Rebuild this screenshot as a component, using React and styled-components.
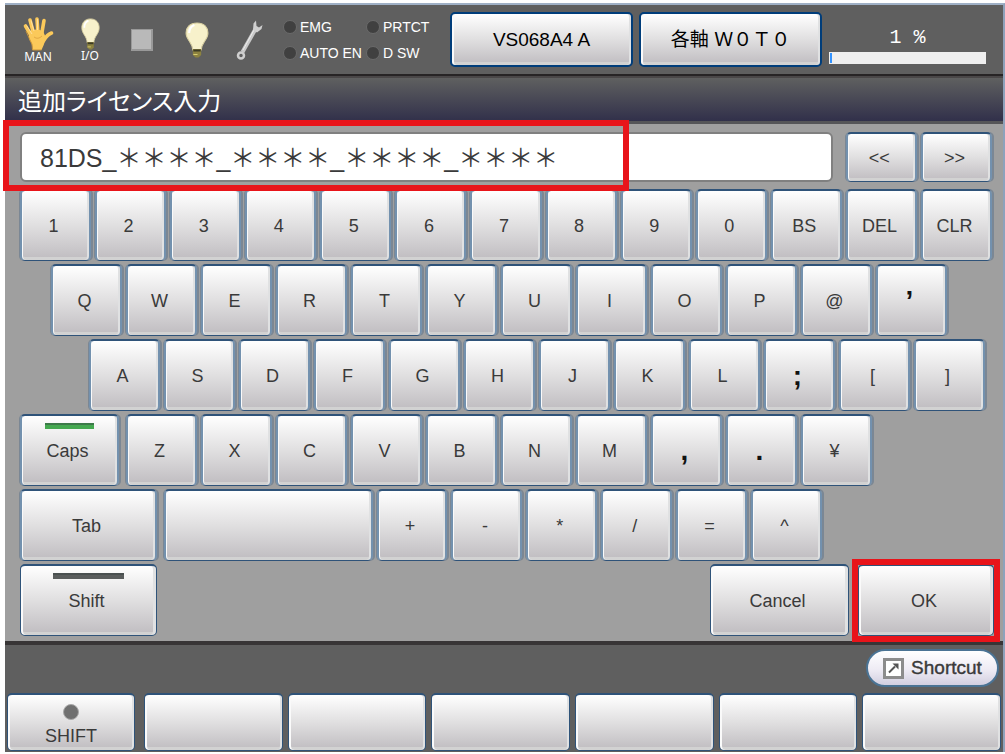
import React, { useState } from "react";
import styled, { createGlobalStyle, css } from "styled-components";

const GlobalStyle = createGlobalStyle`
  *, *::before, *::after { box-sizing: border-box; }
  body {
    margin: 0;
    background: #fff;
    color: #3a3a3a;
    font-family: "Liberation Sans", "Noto Sans CJK JP", sans-serif;
    font-size: 18px;
    line-height: 20px;
  }
  button, input { font: inherit; color: inherit; margin: 0; }
`;

const Pendant = styled.div`
  margin: 3px 0 3px 5px;
  border-top: 2px solid #9fb0c6;
  border-right: 2px solid #8ea2bb;
`;

const StatusBar = styled.header`
  display: flex;
  align-items: center;
  height: 71px;
  padding: 0 17px 0 16px;
  background: #5f5f5f;
  border-bottom: 2px solid #272425;
  color: #fff;
`;

const StatusIcon = styled.div`
  flex: none;
  display: flex;
  flex-direction: column;
  align-items: center;
  width: ${(p) => p.$width}px;
  font: 12px/12px "Noto Sans", "Liberation Sans", sans-serif;
  svg { display: block; }
`;

const LedGrid = styled.ul`
  flex: none;
  display: grid;
  grid-template-columns: 83px 84px;
  row-gap: 6px;
  margin: 0 0 0 18px;
  padding: 0;
  list-style: none;
  font-size: 14px;
`;

const LedItem = styled.li`
  display: flex;
  align-items: center;
  gap: 3px;
  white-space: nowrap;
  line-height: 20px;
`;

const Led = styled.span`
  width: 14px;
  height: 14px;
  border-radius: 50%;
  background: #404040;
  border: 1px solid #6a6a6a;
`;

const face = css`
  border: 1px solid #2f5379;
  border-top-width: 2px;
  border-radius: 5px;
  background: linear-gradient(#fff, #e0dfe0 50%, #bfbcc0);
  box-shadow: inset 2px 0 #fafafa, inset -2px 0 #e0e1e2, inset 0 -3px #d2d2d2;
  padding: 0;
  cursor: pointer;
`;

const HeaderButton = styled.button`
  ${face}
  flex: 1 1 0;
  height: 55px;
  margin-right: 6px;
  border-color: #003d7a;
  border-width: 2px;
  color: #000;
  font-size: 19px;
`;

const Speed = styled.div`
  flex: 0 0 157px;
  display: flex;
  flex-direction: column;
  align-items: center;
  gap: 3px;
  padding: 12px 0 0;
  margin-left: 1px;
  font: 20px/22px "Liberation Mono", monospace;
`;

const SpeedTrack = styled.div`
  width: 100%;
  height: 12px;
  padding: 1px;
  background: #efefef;
`;

const SpeedFill = styled.div`
  height: 10px;
  background: #3393ff;
`;

const Title = styled.h1`
  margin: 0;
  height: 48px;
  padding-left: 13px;
  background: linear-gradient(#5f6060, #31304a);
  border-top: 2px solid #4a4748;
  border-bottom: 3px solid #555558;
  color: #fff;
  font: 400 24px/43px "Noto Sans CJK JP", sans-serif;
  font-feature-settings: "palt";
`;

const KeyArea = styled.main`
  padding: 8px 11px 5px 15px;
  background: #9f9f9f;
  border-bottom: 4px solid #383536;
`;

const EntryRow = styled.div`
  position: relative;
  display: flex;
  gap: 4px;
  margin-bottom: 7px;
`;

const Entry = styled.input`
  flex: 812 1 812px;
  min-width: 0;
  height: 50px;
  margin-right: 9px;
  padding: 0 0 2px 18px;
  border: 2px solid #808080;
  border-radius: 6px;
  background: #fff;
  font-size: 25px;
  outline: none;
`;

const Callout = styled.span`
  position: absolute;
  z-index: 1;
  border: 6px solid #e8141a;
  pointer-events: none;
`;

const EntryCallout = styled(Callout)`
  left: -17px;
  right: 363px;
  top: -12px;
  bottom: -9px;
`;

const OkCallout = styled(Callout)`
  inset: -7px;
`;

const KeyRow = styled.div`
  display: flex;
  gap: 4px;
  padding: 0 ${(p) => p.$right || 0}px 0 ${(p) => p.$left || 0}px;
  margin-bottom: 3px;
`;

const KeyButton = styled.button`
  ${face}
  position: relative;
  flex: ${(p) => p.$span || 71} 1 ${(p) => p.$span || 71}px;
  min-width: 0;
  height: ${(p) => p.$height || 72}px;
  margin-right: ${(p) => p.$after || 0}px;
  padding-right: 4px;
  border-width: 2px 2px 1px;
  border-color: #2f5379 #7391ae;
  box-shadow: inset 1px 0 #fafafa, inset -2px 0 #e0e1e2, inset 0 -3px #d2d2d2,
    -1px 0 #7b8794, 2px 0 #7b8794;
  ${(p) => p.$mark && "font-size: 28px; font-weight: 700; color: #111;"}
`;

const Lamp = styled.span`
  position: absolute;
  top: 7px;
  left: 24%;
  right: 24%;
  height: 6px;
  background: ${(p) => (p.$on ? "#45a850" : "#5a5d5d")};
  border-top: 2px solid ${(p) => (p.$on ? "#3c7a48" : "#4a5050")};
`;

const Actions = styled.div`
  display: flex;
  justify-content: space-between;
  margin-right: -2px;
`;

const ActionButton = styled(KeyButton)`
  flex: none;
  width: ${(p) => p.$width}px;
  border-width: 2px 1px 1px;
  border-color: #2f5379;
  box-shadow: inset 2px 0 #fafafa, inset -3px 0 #e0e1e2, inset 0 -3px #d2d2d2;
`;

const ActionGroup = styled.div`
  display: flex;
  gap: 9px;
`;

const Footer = styled.footer`
  background: #5f5f5f;
  padding: 4px 2px 1px 2px;
`;

const ShortcutBar = styled.div`
  display: flex;
  justify-content: flex-end;
  padding-right: 2px;
  margin-bottom: 6px;
`;

const ShortcutButton = styled.button`
  display: flex;
  align-items: center;
  justify-content: center;
  gap: 7px;
  width: 133px;
  height: 38px;
  padding: 0;
  border: 2px solid #4a7394;
  border-radius: 19px;
  background: linear-gradient(#fff, #eeebf4 55%, #d2cfe0);
  font-size: 19px;
  -webkit-text-stroke: 0.4px #3a3a3a;
  cursor: pointer;
`;

const FunctionBar = styled.div`
  display: flex;
  gap: 5px;
`;

const FunctionButton = styled.button`
  ${face}
  flex: ${(p) => p.$span || 139} 1 0;
  min-width: 0;
  height: 58px;
  margin-right: ${(p) => p.$after || 0}px;
  display: flex;
  flex-direction: column;
  align-items: center;
  justify-content: flex-end;
  gap: 6px;
  padding-bottom: 4px;
`;

const ShiftDot = styled.span`
  width: 16px;
  height: 16px;
  border-radius: 50%;
  background: #707070;
  border: 1px solid #a8a8a8;
`;

const HandIcon = () => (
  <svg width="31" height="34" viewBox="0 0 31 34" aria-hidden="true">
    <g fill="none" stroke="#fbc95a" strokeWidth="3.600" strokeLinecap="round">
      <path d="M2.500 9 9 20" />
      <path d="M7 3 11 18" />
      <path d="M14 2 15 17" />
      <path d="M21 3.500 18.500 18" />
      <path d="M28.500 16Q24 17.500 20.500 24" />
    </g>
    <path d="M6 14Q13 11 20 14L23 21Q21 28 18.500 33H9.500Q10 28 6 22Z" fill="#fbc95a" />
    <path d="M3 14 6.500 22Q10 27 9.500 33H18.500" stroke="#c9953a" fill="none" />
    <path d="M3.500 8.500 9 17M8 3.500 11 14M14.500 2V13" stroke="#ffe0a0" fill="none" />
    <path d="M11 20Q15 23 19 19" stroke="#e3aa44" fill="none" />
  </svg>
);

const BulbIcon = ({ width, height }) => (
  <svg width={width} height={height} viewBox="0 0 23 36" preserveAspectRatio="none" aria-hidden="true">
    <path d="M11.500 1C4.500 1 1 5.500 1 11 1 18 7 20 7.500 28H15.500C16 20 22 18 22 11 22 5.500 18.500 1 11.500 1Z" fill="#f7f1cb" stroke="#d9d0a2" />
    <path d="M4 11Q4 5 9 3" stroke="#fff" strokeWidth="2" fill="none" />
    <path d="M7.500 27H15.500V33L13 35.500H10L7.500 33Z" fill="#8d8340" />
    <path d="M8 28.500H15" stroke="#3c3b25" strokeWidth="2" />
    <path d="M8 32.500H12" stroke="#d8cd72" />
  </svg>
);

const WrenchIcon = () => (
  <svg width="28" height="42" viewBox="0 0 28 42" aria-hidden="true">
    <path d="M6.500 33 19.500 10" stroke="#c9c9c9" strokeWidth="4" />
    <path d="M7 31 18 11" stroke="#ededed" />
    <path d="M20 1.500 17.500 4.500 17 11 21 13.500 25.500 10 26.500 6 23 8.500 20.500 7Z" fill="#cfcfcf" />
    <circle cx="5" cy="36.500" r="3" fill="none" stroke="#cfcfcf" strokeWidth="2.500" />
  </svg>
);

const StopIcon = () => (
  <svg width="22" height="22" viewBox="0 0 22 22" aria-hidden="true">
    <rect width="22" height="22" fill="#999" />
    <rect x="1" y="1" width="19" height="19" fill="#b9b9b9" />
  </svg>
);

const ShortcutIcon = () => (
  <svg width="21" height="21" viewBox="0 0 21 21" aria-hidden="true">
    <rect x="1.500" y="1.500" width="18" height="18" fill="#fff" stroke="#8c8c8c" strokeWidth="3" />
    <path d="M6 14.500 12 8.500" stroke="#555" strokeWidth="2" />
    <path d="M9.500 5.500H15.500V11.500Z" fill="#555" />
  </svg>
);

const rows = [
  { keys: ["1", "2", "3", "4", "5", "6", "7", "8", "9", "0", "BS", "DEL", "CLR"], left: 0, right: 0 },
  { keys: ["Q", "W", "E", "R", "T", "Y", "U", "I", "O", "P", "@", "’"], left: 31, right: 45 },
  { keys: ["A", "S", "D", "F", "G", "H", "J", "K", "L", ";", "[", "]"], left: 69, right: 7 },
];
const marks = ["’", ";", ",", "."];

const Key = ({ label }) => <KeyButton $mark={marks.includes(label)}>{label}</KeyButton>;

export default function App() {
  const [license, setLicense] = useState("81DS_＊＊＊＊_＊＊＊＊_＊＊＊＊_＊＊＊＊");
  const speed = 1;

  return (
    <>
      <GlobalStyle />
      <Pendant>
        <StatusBar>
          <StatusIcon $width={34}><HandIcon />MAN</StatusIcon>
          <StatusIcon $width={70}><BulbIcon width={19} height={32} />I/O</StatusIcon>
          <StatusIcon $width={34}><StopIcon /></StatusIcon>
          <StatusIcon $width={76}><BulbIcon width={24} height={36} /></StatusIcon>
          <StatusIcon $width={30}><WrenchIcon /></StatusIcon>
          <LedGrid>
            {["EMG", "PRTCT", "AUTO EN", "D SW"].map((name) => (
              <LedItem key={name}><Led />{name}</LedItem>
            ))}
          </LedGrid>
          <HeaderButton>VS068A4 A</HeaderButton>
          <HeaderButton>各軸 Ｗ０Ｔ０</HeaderButton>
          <Speed>
            <span>{speed} %</span>
            <SpeedTrack><SpeedFill style={{ width: `${speed}%` }} /></SpeedTrack>
          </Speed>
        </StatusBar>
        <Title>追加ライセンス入力</Title>
        <KeyArea>
          <EntryRow>
            <Entry aria-label="追加ライセンス入力" value={license} onChange={(e) => setLicense(e.target.value)} />
            <KeyButton $height={50}>&lt;&lt;</KeyButton>
            <KeyButton $height={50}>&gt;&gt;</KeyButton>
            <EntryCallout />
          </EntryRow>
          {rows.map((row) => (
            <KeyRow key={row.keys[0]} $left={row.left} $right={row.right}>
              {row.keys.map((k) => <Key key={k} label={k} />)}
            </KeyRow>
          ))}
          <KeyRow $right={120}>
            <KeyButton $span={99} $after={3}><Lamp $on />Caps</KeyButton>
            {["Z", "X", "C", "V", "B", "N", "M", ",", ".", "¥"].map((k) => <Key key={k} label={k} />)}
          </KeyRow>
          <KeyRow $right={170}>
            <KeyButton $span={137} $after={3}>Tab</KeyButton>
            <KeyButton $span={209} aria-label="Space" />
            {["+", "-", "*", "/", "=", "^"].map((k) => <Key key={k} label={k} />)}
          </KeyRow>
          <Actions>
            <ActionButton $width={137}><Lamp />Shift</ActionButton>
            <ActionGroup>
              <ActionButton $width={139}>Cancel</ActionButton>
              <ActionButton $width={136}>OK<OkCallout /></ActionButton>
            </ActionGroup>
          </Actions>
        </KeyArea>
        <Footer>
          <ShortcutBar>
            <ShortcutButton><ShortcutIcon />Shortcut</ShortcutButton>
          </ShortcutBar>
          <FunctionBar>
            <FunctionButton $span={128} $after={4}><ShiftDot />SHIFT</FunctionButton>
            {["F1", "F2", "F3", "F4", "F5", "F6"].map((f) => <FunctionButton key={f} aria-label={f} />)}
          </FunctionBar>
        </Footer>
      </Pendant>
    </>
  );
}
